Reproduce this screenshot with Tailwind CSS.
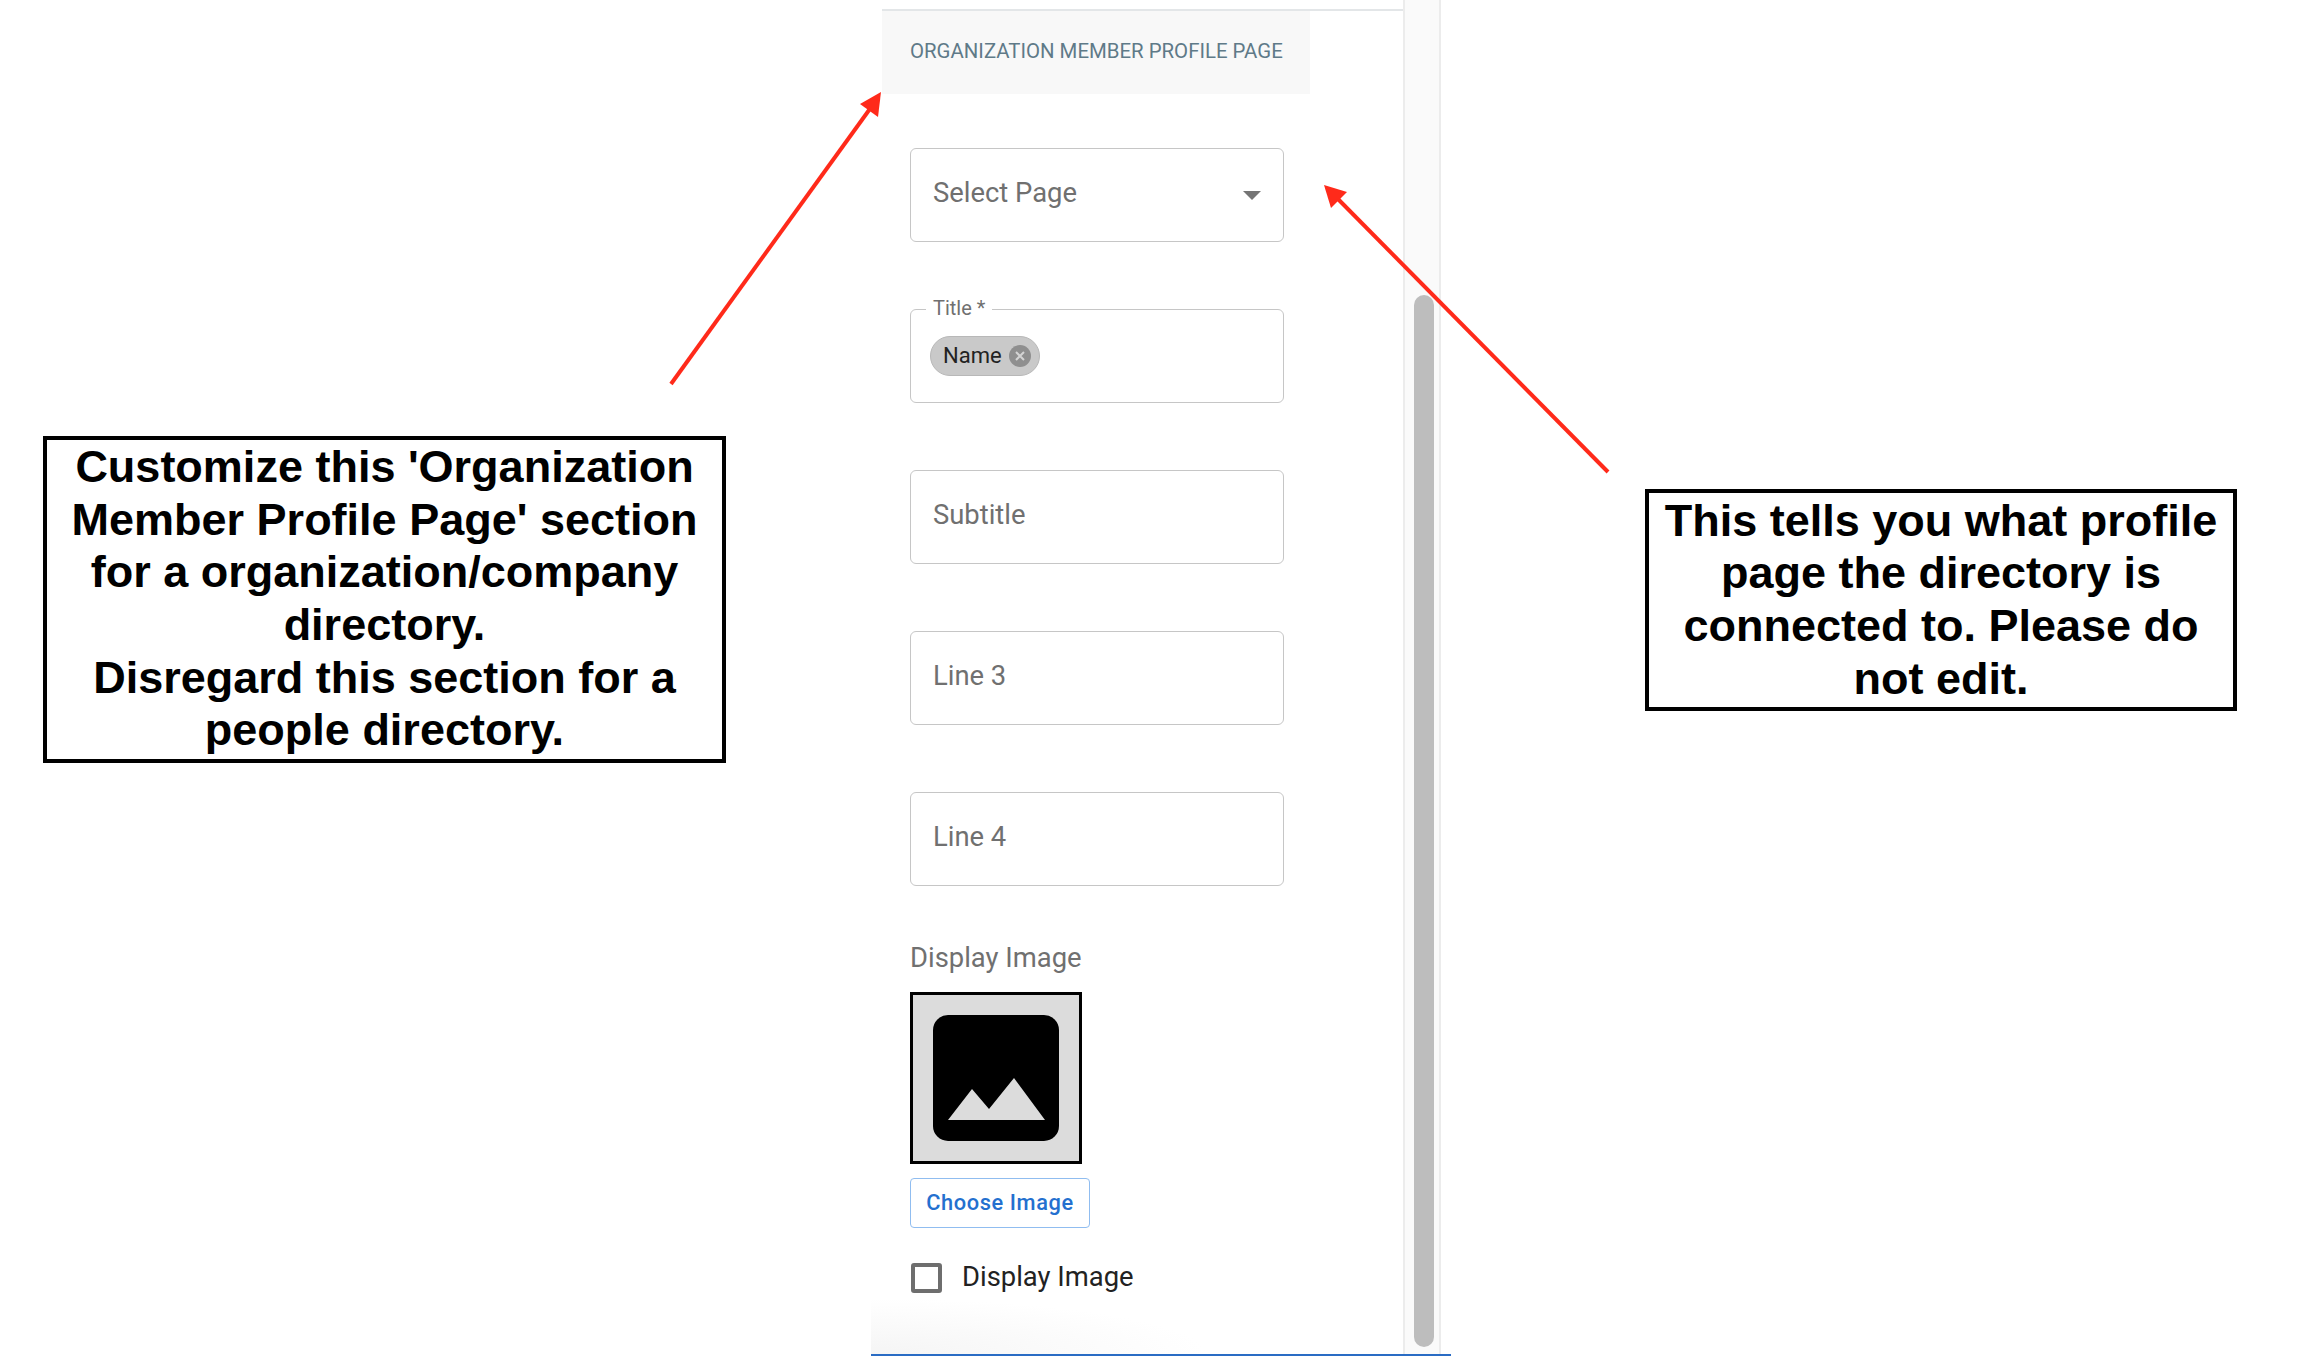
<!DOCTYPE html>
<html lang="en">
<head>
<meta charset="utf-8">
<title>Organization Member Profile Page</title>
<script src="https://cdn.jsdelivr.net/npm/@tailwindcss/browser@4"></script>
</head>
<body class="bg-white">
<div class="relative h-[1356px] w-[2298px] overflow-hidden bg-white font-['Roboto',sans-serif]">

  <!-- sidebar panel -->
  <div class="ml-[871px] flex h-full w-[580px] border-b-2 border-[#2a6cc4]">
    <div class="relative h-full w-[532px] pl-[11px] pt-[9px]">
      <div class="w-[521px] border-t-2 border-[#e3e6e8]">
        <div class="flex h-[83px] w-[428px] items-center bg-[#f8f8f8] pl-[28px] pb-[3px]">
          <span class="text-[20.4px] whitespace-nowrap text-[#5f7a88]">ORGANIZATION MEMBER PROFILE PAGE</span>
        </div>
      </div>

      <div class="ml-[28px] mt-[54px] flex w-[374px] flex-col gap-[67px]">
        <div class="flex h-[94px] items-center justify-between rounded-[6px] border border-[#c6c6c6] pb-[3px] pl-[22px] pr-[22px]">
          <span class="text-[27.4px] text-[#707070]">Select Page</span>
          <span class="mt-[3px] h-0 w-0 border-x-[9px] border-t-[9px] border-x-transparent border-t-[#757575]"></span>
        </div>

        <div class="relative flex h-[94px] items-center rounded-[6px] border border-[#c6c6c6] pb-[1px] pl-[19px]">
          <span class="absolute -top-[14px] left-[15px] bg-white px-[7px] text-[20px] leading-[24px] text-[#707070]">Title *</span>
          <span class="flex h-[40px] w-[110px] items-center rounded-full border border-[#b8b8b8] bg-[#c9c9c9] pl-[12px]">
            <span class="text-[22px] text-[#222]">Name</span>
            <svg class="ml-[7px]" width="22" height="22" viewBox="0 0 22 22"><circle cx="11" cy="11" r="11" fill="#8f8f8f"/><path d="M7 7l8 8M15 7l-8 8" stroke="#d4d4d4" stroke-width="2"/></svg>
          </span>
        </div>

        <div class="flex h-[94px] items-center rounded-[6px] border border-[#c6c6c6] pb-[3px] pl-[22px] text-[27.4px] text-[#707070]">Subtitle</div>
        <div class="flex h-[94px] items-center rounded-[6px] border border-[#c6c6c6] pb-[3px] pl-[22px] text-[27.4px] text-[#707070]">Line 3</div>
        <div class="flex h-[94px] items-center rounded-[6px] border border-[#c6c6c6] pb-[3px] pl-[22px] text-[27.4px] text-[#707070]">Line 4</div>
      </div>

      <div class="ml-[28px] mt-[55px] text-[27.4px] leading-[34px] text-[#707070]">Display Image</div>
      <div class="ml-[28px] mt-[17px] flex h-[172px] w-[172px] items-center justify-center border-[3px] border-black bg-[#dcdcdc]">
        <svg width="126" height="126" viewBox="0 0 126 126"><rect width="126" height="126" rx="15" fill="#000"/><path d="M15 105L39 74L56 94L81 63L112 105Z" fill="#dcdcdc"/></svg>
      </div>
      <div class="ml-[28px] mt-[14px] flex h-[50px] w-[180px] items-center justify-center rounded-[4px] border border-[#90bdf0] pt-[1px] text-[21.8px] font-medium tracking-[0.6px] text-[#2470cf]">Choose Image</div>
      <div class="ml-[28px] mt-[29px] flex items-center gap-[20px]">
        <span class="ml-[1px] h-[30px] w-[31px] rounded-[3px] border-4 border-[#6e6e6e]"></span>
        <span class="text-[27.4px] text-[#222]">Display Image</span>
      </div>

      <div class="absolute bottom-0 left-0 h-[56px] w-[340px] bg-[radial-gradient(ellipse_at_bottom_left,#f5f5f5,transparent_70%)]"></div>
    </div>

    <!-- scrollbar -->
    <div class="flex h-full w-[38px] justify-center border-x-2 border-[#ececec] bg-[#fafafa] pl-[3px] pt-[295px]">
      <div class="h-[1052px] w-[20px] rounded-full bg-[#bdbdbd]"></div>
    </div>
  </div>

  <!-- callouts -->
  <div class="absolute left-[43px] top-[435.5px] flex h-[327px] w-[683px] flex-col items-center justify-center border-4 border-black bg-white text-center font-['Liberation_Sans',sans-serif] text-[45px] font-bold leading-[52.6px] text-black">
    <p>Customize this 'Organization</p>
    <p>Member Profile Page' section</p>
    <p>for a organization/company</p>
    <p>directory.</p>
    <p>Disregard this section for a</p>
    <p>people directory.</p>
  </div>
  <div class="absolute left-[1645px] top-[489px] flex h-[222px] w-[592px] flex-col items-center justify-center border-4 border-black bg-white text-center font-['Liberation_Sans',sans-serif] text-[45px] font-bold leading-[52.6px] text-black">
    <p>This tells you what profile</p>
    <p>page the directory is</p>
    <p>connected to. Please do</p>
    <p>not edit.</p>
  </div>

  <!-- arrows -->
  <svg class="absolute inset-0" width="2298" height="1356" viewBox="0 0 2298 1356" fill="none">
    <path d="M671 384L872 106" stroke="#ff2a1a" stroke-width="4"/>
    <path d="M881 92L878 117L860 104Z" fill="#ff2a1a"/>
    <path d="M1608 472L1335 196" stroke="#ff2a1a" stroke-width="4"/>
    <path d="M1324 185L1347 192L1331 208Z" fill="#ff2a1a"/>
  </svg>
</div>
</body>
</html>
